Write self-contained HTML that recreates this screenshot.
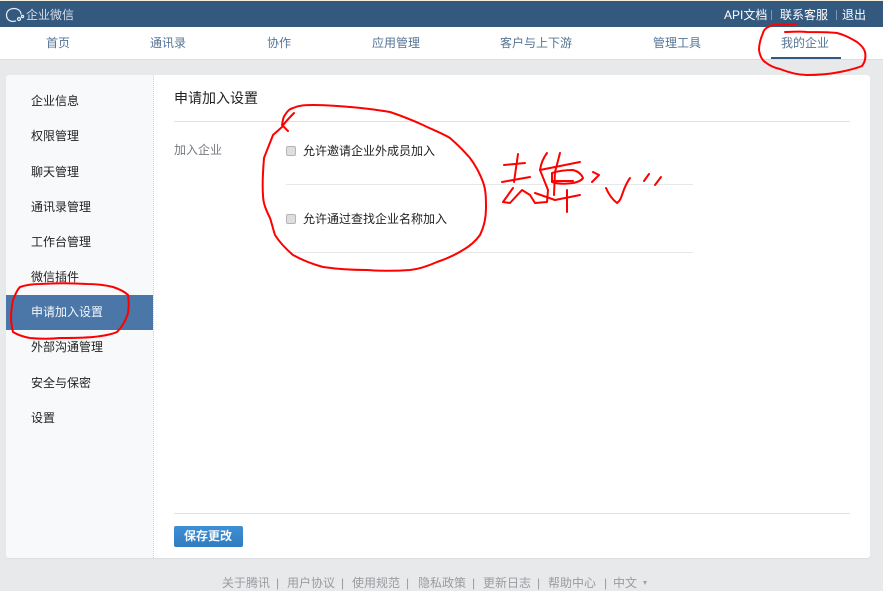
<!DOCTYPE html>
<html lang="zh-CN">
<head>
<meta charset="utf-8">
<title>企业微信</title>
<style>
html,body{margin:0;padding:0}
body{width:883px;height:589px;position:relative;overflow:hidden;background:#e8e9eb;font-family:"Liberation Sans","Noto Sans CJK SC",sans-serif;font-size:12px;color:#333}
.t{position:absolute;white-space:nowrap;line-height:16px}
.b{position:absolute}
.nav{color:#557496;top:35px}
.side{left:31px;color:#222}
.foot{color:#999c9f;top:575px}
</style>
</head>
<body>
<div class="b" style="left:0;top:0;width:883px;height:1px;background:#f3efdc"></div>
<div class="b" style="left:0;top:1px;width:883px;height:26px;background:#34597f"></div>
<div class="b" style="left:0;top:27px;width:883px;height:32px;background:#fff;border-bottom:1px solid #dcdde0"></div>
<svg class="b" style="left:5px;top:6px" width="22" height="18" viewBox="0 0 22 18" fill="none" stroke="#e6ecf2" stroke-width="1.2"><path d="M7 15.500 C3 14.500 1.500 12 1.500 9 C1.500 5 4.800 2.500 9 2.500 C13 2.500 16 5 16 8.500"/><path d="M7 15.500 L11 15"/><circle cx="14" cy="13" r="1.500"/><circle cx="17.500" cy="10.500" r="1.100"/></svg>
<div class="t" style="left:26px;top:7px;color:#d5dee8">企业微信</div>
<div class="t" style="left:724px;top:7px;color:#fff">API文档</div>
<div class="b" style="left:771px;top:10px;width:1px;height:10px;background:#7f97b0"></div>
<div class="t" style="left:780px;top:7px;color:#fff">联系客服</div>
<div class="b" style="left:836px;top:10px;width:1px;height:10px;background:#7f97b0"></div>
<div class="t" style="left:842px;top:7px;color:#fff">退出</div>

<div class="t nav" style="left:46px">首页</div>
<div class="t nav" style="left:150px">通讯录</div>
<div class="t nav" style="left:267px">协作</div>
<div class="t nav" style="left:372px">应用管理</div>
<div class="t nav" style="left:500px">客户与上下游</div>
<div class="t nav" style="left:653px">管理工具</div>
<div class="t nav" style="left:781px">我的企业</div>
<div class="b" style="left:771px;top:57px;width:70px;height:2px;background:#34597f"></div>

<div class="b" style="left:6px;top:75px;width:864px;height:483px;background:#fff;border-radius:3px;box-shadow:0 1px 1px #dcdde0"></div>
<div class="b" style="left:6px;top:75px;width:147px;height:483px;background:#f8f9fb;border-right:1px dotted #cfd2d6;border-radius:3px 0 0 3px"></div>

<div class="t side" style="top:93px">企业信息</div>
<div class="t side" style="top:128px">权限管理</div>
<div class="t side" style="top:164px">聊天管理</div>
<div class="t side" style="top:199px">通讯录管理</div>
<div class="t side" style="top:234px">工作台管理</div>
<div class="t side" style="top:269px">微信插件</div>
<div class="b" style="left:6px;top:295px;width:147px;height:35px;background:#4a76a8"></div>
<div class="t side" style="top:304px;color:#f4f7fa">申请加入设置</div>
<div class="t side" style="top:339px">外部沟通管理</div>
<div class="t side" style="top:375px">安全与保密</div>
<div class="t side" style="top:410px">设置</div>

<div class="t" style="left:174px;top:90px;font-size:14px;color:#222">申请加入设置</div>
<div class="b" style="left:174px;top:121px;width:676px;height:1px;background:#e0e1e3"></div>
<div class="t" style="left:174px;top:142px;color:#777a7f">加入企业</div>

<div class="b" style="left:286px;top:146px;width:8px;height:8px;background:#dedede;border:1px solid #b5b5b5;border-radius:2px"></div>
<div class="t" style="left:303px;top:143px;color:#222">允许邀请企业外成员加入</div>
<div class="b" style="left:286px;top:184px;width:407px;height:1px;background:#e6e7e9"></div>
<div class="b" style="left:286px;top:214px;width:8px;height:8px;background:#dedede;border:1px solid #b5b5b5;border-radius:2px"></div>
<div class="t" style="left:303px;top:211px;color:#222">允许通过查找企业名称加入</div>
<div class="b" style="left:286px;top:252px;width:407px;height:1px;background:#e6e7e9"></div>

<div class="b" style="left:174px;top:513px;width:676px;height:1px;background:#e0e1e3"></div>
<div class="b" style="left:174px;top:526px;width:69px;height:21px;background:linear-gradient(#3f8fd6,#2f7cc0);border-radius:2px"></div>
<div class="t" style="left:184px;top:528px;color:#f6f9fc;font-weight:bold">保存更改</div>

<div class="t foot" style="left:222px">关于腾讯</div><div class="t foot" style="left:276px">|</div>
<div class="t foot" style="left:287px">用户协议</div><div class="t foot" style="left:341px">|</div>
<div class="t foot" style="left:352px">使用规范</div><div class="t foot" style="left:406px">|</div>
<div class="t foot" style="left:418px">隐私政策</div><div class="t foot" style="left:472px">|</div>
<div class="t foot" style="left:483px">更新日志</div><div class="t foot" style="left:537px">|</div>
<div class="t foot" style="left:548px">帮助中心</div><div class="t foot" style="left:604px">|</div>
<div class="t foot" style="left:613px">中文</div>
<div class="b" style="left:643px;top:581px;width:0;height:0;border-left:2.500px solid transparent;border-right:2.500px solid transparent;border-top:4px solid #a0a3a6"></div>

<svg class="b" style="left:0;top:0" width="883" height="589" viewBox="0 0 883 589" fill="none" stroke="#f00" stroke-width="2" stroke-linecap="round" stroke-linejoin="round">
<path d="M796 24 C788 25 780 24 773 25 C767 27 764 29 763 33 C760 40 759 45 759 50 C760 56 762 60 765 62 C770 66 775 68 780 69 C790 73 798 75 807 75 C820 75 830 74 840 72 C850 70 857 68 862 66 C865 62 866 57 865 52 C864 48 861 45 857 42 C850 38 845 35 837 33 C828 32 818 32 807 32 C800 31 792 32 785 32"/>
<path d="M288 131 L282 125 C283 120 283 117 285 115 C288 110 290 109 293 108 C300 105 306 105 313 105 C326 105 338 106 350 107 C364 108 378 110 390 112 C402 116 412 120 423 125 C433 130 442 133 450 138 C458 145 464 151 470 158 C476 166 480 174 483 182 C486 190 486 199 486 208 C486 218 484 227 480 235 C475 242 470 246 463 250 C455 255 446 259 437 262 C428 266 420 269 410 270 C396 271 381 271 367 270 C352 270 337 269 323 267 C312 264 302 260 293 255 C286 249 280 243 275 235 C273 229 272 224 270 218 C266 210 263 203 263 195 C262 182 263 170 264 158 C267 150 270 143 273 135 L282 127 C285 122 290 117 294 113"/>
<path d="M20 287 C16 291 15 296 13 300 C12 306 11 311 11 317 C11 322 12 328 13 332 C18 335 24 337 30 338 C40 339 50 339 60 338 C71 338 82 338 93 337 C102 336 110 335 117 332 C122 327 126 320 128 313 C129 307 129 301 128 295 C124 291 119 289 113 287 C105 285 96 284 87 284 C71 283 55 283 40 284 C33 284 26 285 20 287"/>
<path d="M518 154 L514 182 M504 165 L525 163 M502 182 L530 177"/>
<path d="M513 188 L503 202 L510 203 L522 190 L530 195 L535 203 L547 202 L548 190 L540 170 C541 163 544 157 547 153"/>
<path d="M560 153 L555 172 L554 195 M540 170 L580 162 M552 173 C552 176 552 179 552 182 C558 184 566 184 573 183 C578 182 582 180 583 178 C581 173 577 171 573 170 C566 170 558 171 552 173 M553 181 L573 181 M535 193 L555 200 L580 195 M567 190 L567 212"/>
<path d="M593 172 L599 175 L592 182 M606 188 C609 195 613 200 617 203 C620 201 621 198 622 195 C624 189 627 182 630 178 M649 174 L644 181 M661 177 L655 185"/>
</svg>
</body>
</html>
